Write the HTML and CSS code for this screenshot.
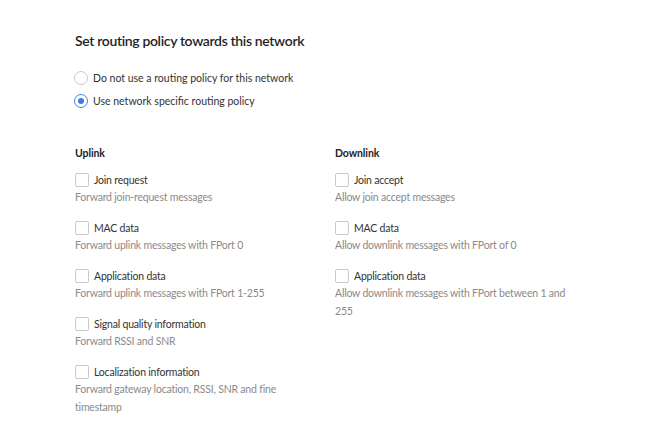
FILE: index.html
```html
<!DOCTYPE html>
<html lang="en">
<head>
    <meta charset="UTF-8">
    <title>Routing policy</title>
    <link rel="stylesheet" href="styles.css">
</head>
<body>
    <div class="container">
        <h2 class="title">Set routing policy towards this network</h2>

        <div class="radio-group">
            <label class="radio">
                <span class="radio-dot"></span>
                Do not use a routing policy for this network
            </label>
            <label class="radio">
                <span class="radio-dot checked"></span>
                Use network specific routing policy
            </label>
        </div>

        <div class="columns">
            <div class="column">
                <h3 class="column-title">Uplink</h3>
                <div class="option">
                    <label class="check"><span class="box"></span>Join request</label>
                    <p class="desc">Forward join-request messages</p>
                </div>
                <div class="option">
                    <label class="check"><span class="box"></span>MAC data</label>
                    <p class="desc">Forward uplink messages with FPort 0</p>
                </div>
                <div class="option">
                    <label class="check"><span class="box"></span>Application data</label>
                    <p class="desc">Forward uplink messages with FPort 1-255</p>
                </div>
                <div class="option">
                    <label class="check"><span class="box"></span>Signal quality information</label>
                    <p class="desc">Forward RSSI and SNR</p>
                </div>
                <div class="option">
                    <label class="check"><span class="box"></span>Localization information</label>
                    <p class="desc">Forward gateway location, RSSI, SNR and fine timestamp</p>
                </div>
            </div>
            <div class="column">
                <h3 class="column-title">Downlink</h3>
                <div class="option">
                    <label class="check"><span class="box"></span>Join accept</label>
                    <p class="desc">Allow join accept messages</p>
                </div>
                <div class="option">
                    <label class="check"><span class="box"></span>MAC data</label>
                    <p class="desc">Allow downlink messages with FPort of 0</p>
                </div>
                <div class="option">
                    <label class="check"><span class="box"></span>Application data</label>
                    <p class="desc">Allow downlink messages with FPort between 1 and 255</p>
                </div>
            </div>
        </div>
    </div>
</body>
</html>
```

FILE: styles.css
```css
body {
    font-family: 'Lato', sans-serif;
    background-color: #ffffff;
    color: #222;
    margin: 0;
    padding: 0;
}
.container {
    padding: 31px 0 0 75px;
}
.title {
    font-size: 14px;
    font-weight: 600;
    letter-spacing: -0.35px;
    color: #1f1f1f;
    margin: 0 0 20px;
    line-height: 20px;
}
.radio-group {
    display: flex;
    flex-direction: column;
    gap: 9px;
}
.radio {
    display: flex;
    align-items: center;
    gap: 5px;
    font-size: 10.5px;
    letter-spacing: 0;
    color: #333;
    height: 14px;
    margin-left: -1px;
}
.radio-dot {
    width: 12px;
    height: 12px;
    border: 1px solid #c9c9c9;
    border-radius: 50%;
    position: relative;
}
.radio-dot.checked {
    border-color: #4a7fe0;
}
.radio-dot.checked::after {
    content: '';
    position: absolute;
    left: 3px;
    top: 3px;
    width: 6px;
    height: 6px;
    border-radius: 50%;
    background-color: #3d79e6;
}
.columns {
    display: flex;
    gap: 20px;
    margin-top: 38px;
}
.column {
    width: 240px;
}
.column-title {
    font-size: 10.5px;
    font-weight: 700;
    letter-spacing: -0.1px;
    color: #222;
    margin: 0 0 12px;
    line-height: 14px;
}
.option {
    margin-bottom: 14px;
}
.check {
    display: flex;
    align-items: center;
    gap: 5px;
    font-size: 10.5px;
    letter-spacing: -0.2px;
    color: #333;
    height: 16px;
}
.box {
    width: 12px;
    height: 12px;
    border: 1px solid #c9c9c9;
    border-radius: 2px;
}
.desc {
    font-size: 10.5px;
    letter-spacing: -0.2px;
    color: #8a8a8a;
    margin: 0;
    line-height: 18px;
}
```
